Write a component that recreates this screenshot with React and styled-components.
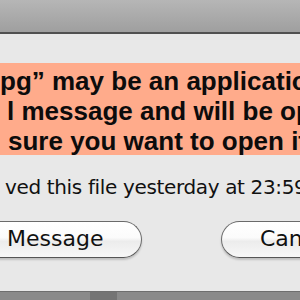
import styled, { createGlobalStyle } from "styled-components";

const GlobalStyle = createGlobalStyle`
  html, body {
    margin: 0;
    padding: 0;
    background: #e8e8e8;
    overflow: hidden;
  }
`;

const Screen = styled.div`
  width: 300px;
  height: 300px;
  overflow: hidden;
  display: flex;
  flex-direction: column;
  background: #e8e8e8;
  font-family: "DejaVu Sans", "Liberation Sans", sans-serif;
  color: #111;
`;

const TitleBar = styled.div`
  height: 32px;
  flex-shrink: 0;
  background: linear-gradient(#b6b6b6, #9f9f9f);
  border-bottom: 2px solid #505050;
`;

const Band = styled.div`
  height: 29px;
  flex-shrink: 0;
  background: #e8e8e8;
`;

const Warning = styled.div`
  height: 92px;
  flex-shrink: 0;
  padding-top: 3px;
  box-sizing: border-box;
  background: #ffab8b;
  overflow: hidden;
`;

const Line = styled.div`
  font-family: "Liberation Sans", Arial, sans-serif;
  font-size: 26px;
  font-weight: bold;
  line-height: 30px;
  white-space: nowrap;
  padding-left: ${(p) => p.indent}px;
  color: #0c0c0c;
`;

const Info = styled.div`
  font-size: 20px;
  letter-spacing: -0.35px;
  line-height: 24px;
  white-space: nowrap;
  padding: 20px 0 0 ${(p) => p.indent}px;
  height: 66px;
  box-sizing: border-box;
`;

const Buttons = styled.div`
  display: flex;
  gap: 79px;
  height: 37px;
  flex-shrink: 0;
`;

const Button = styled.div`
  flex-shrink: 0;
  width: ${(p) => p.width}px;
  margin-left: ${(p) => p.shift || 0}px;
  height: 37px;
  box-sizing: border-box;
  border: 1.5px solid #6a6a6a;
  border-bottom-color: #555;
  border-radius: 19px;
  background: linear-gradient(#ffffff 0%, #fbfbfb 45%, #ececec 55%, #f7f7f7 100%);
  box-shadow: 0 2px 2px rgba(0, 0, 0, 0.18);
  font-size: 22px;
  line-height: 34px;
  padding-left: ${(p) => p.pad}px;
  white-space: nowrap;
  color: #111;
`;

const Footer = styled.div`
  margin-top: auto;
  height: 8px;
  flex-shrink: 0;
  display: flex;
  background: #8a8a8a;
  border-top: 1px solid #6e6e6e;
`;

const FooterGap = styled.div`
  width: 90px;
`;

const FooterBlock = styled.div`
  width: 27px;
  background: #747474;
`;

export default function App() {
  return (
    <Screen>
      <GlobalStyle />
      <TitleBar />
      <Band />
      <Warning>
        <Line indent={0}>pg” may be an application</Line>
        <Line indent={7}>l message and will be opened</Line>
        <Line indent={8}>sure you want to open it</Line>
      </Warning>
      <Info indent={5}>ved this file yesterday at 23:59</Info>
      <Buttons>
        <Button width={180} shift={-38} pad={44}>
          Message
        </Button>
        <Button width={140} pad={38}>
          Cancel
        </Button>
      </Buttons>
      <Footer>
        <FooterGap />
        <FooterBlock />
      </Footer>
    </Screen>
  );
}
